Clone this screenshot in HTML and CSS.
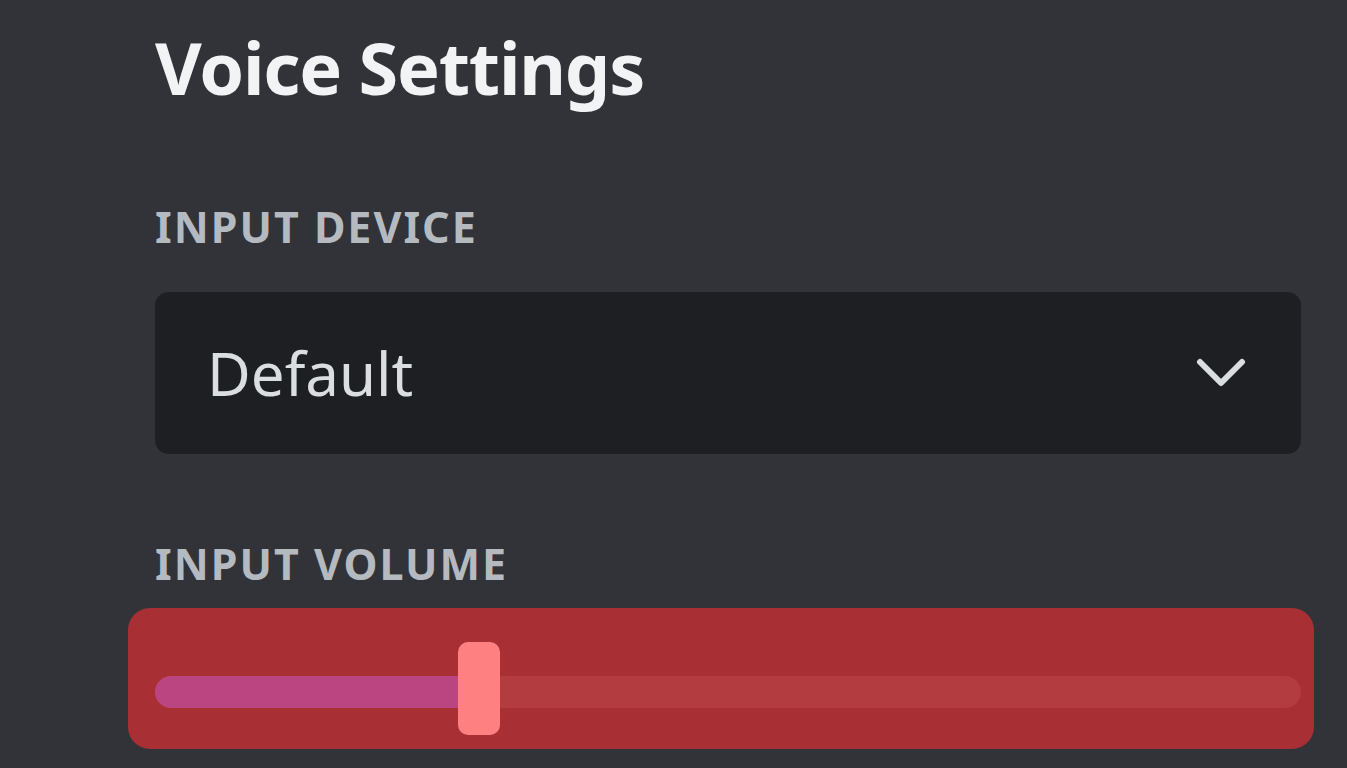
FILE: index.html
```html
<!DOCTYPE html>
<html>
  <head>
    <title>Voice Settings</title>
    <link rel="stylesheet" href="styles.css">
  </head>
  <body>
    <div class="page">
      <h1 class="title">Voice Settings</h1>

      <div class="label">INPUT DEVICE</div>
      <div class="select">
        <span class="select-value">Default</span>
        <svg class="chevron" width="50" height="32" viewBox="0 0 50 32">
          <path d="M4 5 L25 26 L46 5" fill="none" stroke="#dbdee1" stroke-width="6" stroke-linecap="round" stroke-linejoin="round"/>
        </svg>
      </div>

      <div class="label label-volume">INPUT VOLUME</div>
      <div class="highlight">
        <div class="track">
          <div class="fill" style="width: 310px"></div>
          <div class="thumb" style="left: 303px"></div>
        </div>
      </div>
    </div>
  </body>
</html>
```

FILE: styles.css
```css
html, body {
  margin: 0;
  height: 100%;
}
body {
  background-color: #313338;
  font-family: "Noto Sans", "Open Sans", sans-serif;
  overflow: hidden;
}
.page {
  padding: 0 46px 0 155px;
}
.title {
  margin: 0;
  padding-top: 22px;
  font-size: 72px;
  line-height: 90px;
  font-weight: bold;
  color: #f2f3f5;
  letter-spacing: -1.2px;
}
.label {
  margin-top: 90px;
  font-size: 43px;
  line-height: 50px;
  font-weight: bold;
  color: #b5bac1;
  letter-spacing: 2px;
}
.label-volume {
  margin-top: 85px;
}
.select {
  margin-top: 40px;
  height: 162px;
  background-color: #1e1f22;
  border-radius: 14px;
  display: flex;
  align-items: center;
  justify-content: space-between;
  padding: 0 55px 0 52px;
}
.select-value {
  font-size: 60px;
  color: #dbdee1;
}
.chevron {
  display: block;
}
.highlight {
  margin: 19px 0 0 -27px;
  width: 1186px;
  height: 141px;
  box-sizing: border-box;
  background-color: #a82f33;
  border-radius: 22px;
  padding: 34px 13px 0 27px;
}
.track {
  position: relative;
  height: 32px;
  margin-top: 34px;
  background-color: #b33c40;
  border-radius: 16px;
}
.fill {
  height: 100%;
  background-color: #bb4580;
  border-radius: 16px 0 0 16px;
}
.thumb {
  position: absolute;
  top: -34px;
  width: 42px;
  height: 93px;
  background-color: #ff8080;
  border-radius: 10px;
}
```
